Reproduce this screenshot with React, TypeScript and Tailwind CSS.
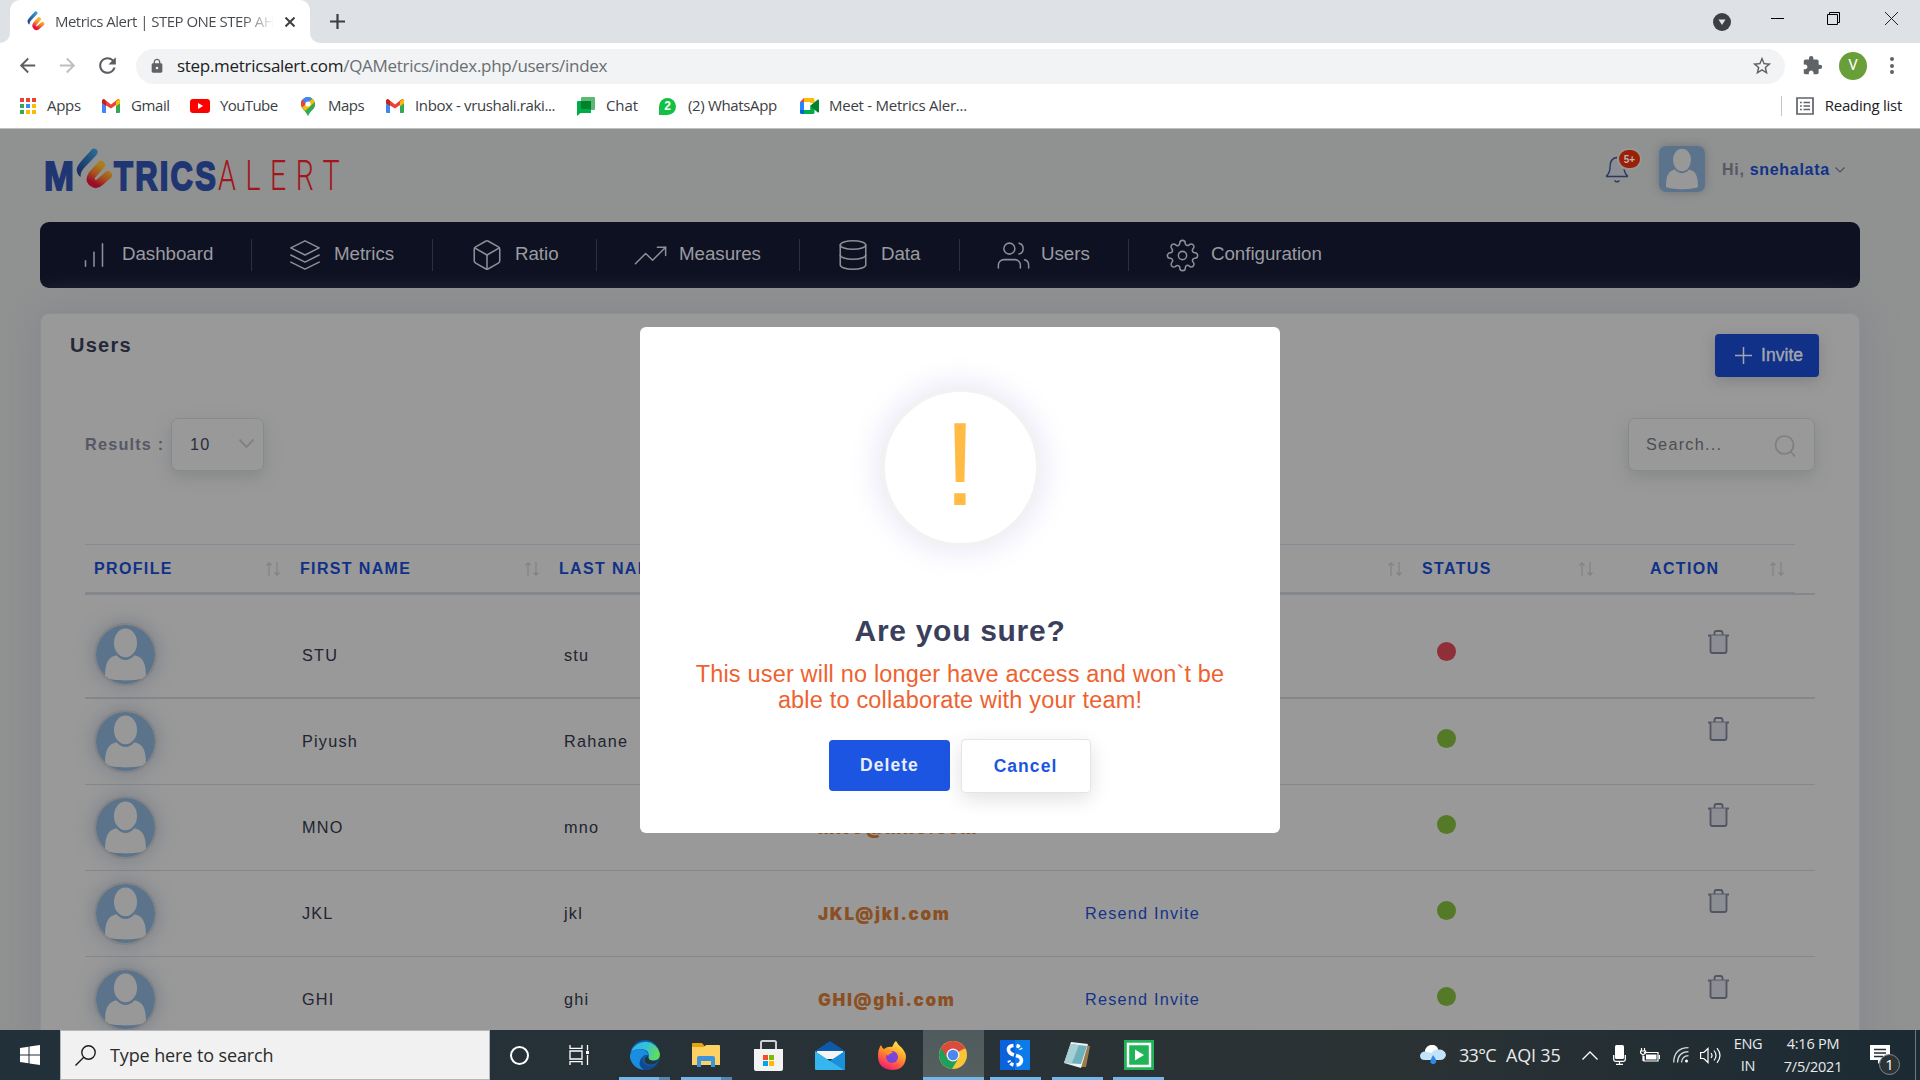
import React from "react";
import { FiBarChart, FiLayers, FiBox, FiTrendingUp, FiDatabase, FiUsers, FiSettings } from "react-icons/fi";
import { MdExtension, MdLock, MdStarBorder, MdRefresh, MdArrowBack, MdArrowForward } from "react-icons/md";

const Swirl = ({ id, className }: { id: string; className: string }) => (
  <svg className={className} viewBox="0 0 37 42" fill="none" strokeLinecap="round">
    <defs>
      <linearGradient id={id + "b"} x1="0" y1="1" x2="1" y2="0">
        <stop offset="0.1" stopColor="#26418f" />
        <stop offset="0.9" stopColor="#3c9bd8" />
      </linearGradient>
      <linearGradient id={id + "o"} x1="0" y1="1" x2="0.5" y2="0">
        <stop offset="0.1" stopColor="#e4113c" />
        <stop offset="0.5" stopColor="#f2702c" />
        <stop offset="1" stopColor="#fbb92a" />
      </linearGradient>
    </defs>
    <path d="M14.500 3Q17-1 20.500 1.500Q23 4 20 7.500L9 19Q4.500 23 4.500 29Q-1 24 1.500 18.500Q3 15 14.500 3Z" fill={`url(#${id}b)`} />
    <path d="M25 17L16 27Q13 32 17 35Q20 37.500 24 34L32 27" stroke={`url(#${id}o)`} strokeWidth="8" strokeLinejoin="round" />
  </svg>
);

const Gmail = () => (
  <svg className="h-[14px] w-[18px]" viewBox="0 0 18 14">
    <path d="M0 2v11q0 1 1 1h3V5Z" fill="#4285f4" />
    <path d="M18 2v11q0 1-1 1h-3V5Z" fill="#34a853" />
    <path d="M14 1.500 18 1.500V4l-4 3.500Z" fill="#fbbc04" />
    <path d="M0 2Q0 0 2 0L9 5.500 16 0Q18 0 18 2L14 6 9 9.500 4 6.500 0 4Z" fill="#ea4335" />
    <path d="M14 2.500 16 .6Q18 0 18 2V4l-4 3Z" fill="#fbbc04" />
    <path d="M0 4V2Q.2.400 2 .300L4 2V7Z" fill="#c5221f" />
  </svg>
);

const AppsIcon = () => (
  <div className="ml-[1px] grid w-[16px] grid-cols-3 gap-[2px]">
    {["bg-[#ea4335]", "bg-[#ea4335]", "bg-[#ea4335]", "bg-[#34a853]", "bg-[#4285f4]", "bg-[#fbbc04]", "bg-[#34a853]", "bg-[#fbbc04]", "bg-[#fbbc04]"].map((c, i) => (
      <div key={i} className={"h-[4px] w-[4px] " + c} />
    ))}
  </div>
);

const YouTube = () => (
  <svg className="h-[14px] w-[20px]" viewBox="0 0 20 14">
    <rect width="20" height="14" rx="3" fill="#f00" />
    <path d="M8 4v6l5.200-3z" fill="#fff" />
  </svg>
);
const Maps = () => (
  <svg className="ml-[2px] h-[19px] w-[14px]" viewBox="0 0 14 19">
    <path d="M7 0a7 7 0 0 0-7 7c0 5 5 7 7 12 2-5 7-7 7-12a7 7 0 0 0-7-7Z" fill="#34a853" />
    <path d="M1 10.500C-1 6 0 4 1.500 2.500L7 7Z" fill="#ea4335" />
    <path d="M1.500 2.500Q6-2 11 1.400L5 8Z" fill="#4285f4" />
    <path d="M1 10.500 11.500 1.800Q15 5 13.500 9L4.500 14Z" fill="#fbbc04" />
    <path d="M13.800 5Q15 11 10 13.500 8 15.500 7 19 6 16.500 4 14Z" fill="#34a853" />
    <circle cx="7" cy="7" r="2.600" fill="#fff" />
  </svg>
);
const Chat = () => (
  <svg className="h-[19px] w-[18px]" viewBox="0 0 18 19">
    <path d="M4 1q0-1 1-1h12q1 0 1 1v11q0 1-1 1H4z" fill="#5bb974" />
    <path d="M0 5q0-1 1-1h13v12H3.500L0 19z" fill="#00ac47" />
    <path d="M4 4h10v8H4z" fill="#00832d" />
  </svg>
);
const WhatsApp = () => (
  <div className="flex h-[17px] w-[17px] items-center justify-center rounded-full rounded-bl-[2px] bg-[#12c143] font-['Liberation_Sans'] text-[12px] font-bold text-white">2</div>
);
const Meet = () => (
  <svg className="h-[16px] w-[19px]" viewBox="0 0 19 16">
    <path d="M4 0h9q1.500 0 1.500 1.500V5H4z" fill="#fbbc04" />
    <path d="M4 0v4H0z" fill="#ea4335" />
    <path d="M0 4h4v8H0z" fill="#2684fc" />
    <path d="M0 12h4v4H1.500Q0 16 0 14.500z" fill="#0066da" />
    <path d="M4 11.500h6V8l4.500-3v9.500Q14.500 16 13 16H4z" fill="#00ac47" />
    <path d="M10 8 17.500 1.800Q19 1 19 2.500v11q0 1.500-1.500.7Z" fill="#00832d" />
    <path d="M4 4h6.200v8H4z" fill="#fff" />
  </svg>
);

const bookmarks: { icon: React.ReactNode; text: string; w: string; track: string }[] = [
  { icon: <AppsIcon />, text: "Apps", w: "w-[83px]", track: "ml-[-1px] tracking-[-0.300px]" },
  { icon: <Gmail />, text: "Gmail", w: "w-[88px]", track: "tracking-[-0.400px]" },
  { icon: <YouTube />, text: "YouTube", w: "w-[109px]", track: "ml-[1px] tracking-[-0.600px]" },
  { icon: <Maps />, text: "Maps", w: "w-[87px]", track: "tracking-[-0.500px]" },
  { icon: <Gmail />, text: "Inbox - vrushali.raki...", w: "w-[191px]", track: "tracking-[-0.370px]" },
  { icon: <Chat />, text: "Chat", w: "w-[82px]", track: "tracking-[-0.100px]" },
  { icon: <WhatsApp />, text: "(2) WhatsApp", w: "w-[141px]", track: "tracking-[-0.350px]" },
  { icon: <Meet />, text: "Meet - Metrics Aler...", w: "w-[180px]", track: "tracking-[-0.250px]" },
];

function Browser() {
  return (
    <div className="h-[129px] shrink-0 border-b border-[#bfc1c4] bg-white font-['Open_Sans',sans-serif]">
      <div className="flex h-[43px] justify-between bg-[#dee1e6]">
        <div className="flex">
          <div className="flex w-[10px] items-end bg-white">
            <div className="h-[43px] w-[10px] rounded-br-[10px] bg-[#dee1e6]" />
          </div>
          <div className="flex w-[300px] items-center rounded-t-[10px] bg-white pl-[17px]">
            <Swirl id="fav" className="mt-[-2px] h-[20px] w-[18px]" />
            <div className="mt-[-2px] ml-[10px] w-[219px] overflow-hidden bg-gradient-to-r from-[#45494d] from-85% to-white bg-clip-text text-[15px] leading-[22px] tracking-[-0.520px] whitespace-nowrap text-transparent">
              Metrics Alert | STEP ONE STEP AHEAD
            </div>
            <svg className="ml-[11px] h-[10px] w-[10px]" viewBox="0 0 10 10" stroke="#3c4043" strokeWidth="2">
              <path d="M.5.500l9 9M9.500.500l-9 9" />
            </svg>
          </div>
          <div className="w-[10px] bg-white">
            <div className="h-[43px] w-[10px] rounded-bl-[10px] bg-[#dee1e6]" />
          </div>
          <svg className="mt-[14px] ml-[10px] h-[15px] w-[15px]" viewBox="0 0 15 15" stroke="#3c4043" strokeWidth="2.200">
            <path d="M7.500 0v15M0 7.500h15" />
          </svg>
        </div>
        <div className="flex pr-[22px]">
          <svg className="mt-[13px] h-[18px] w-[18px]" viewBox="0 0 18 18">
            <circle cx="9" cy="9" r="9" fill="#3c4043" />
            <path d="M5.500 6.500h7L9 12z" fill="#dee1e6" />
          </svg>
          <div className="mt-[18px] ml-[40px] h-[1px] w-[13px] bg-black" />
          <svg className="mt-[12px] ml-[43px] h-[14px] w-[13px]" viewBox="0 0 13 14" fill="none" stroke="#000">
            <path d="M.5 2.500h10v10H.500zM2.500 2.500v-2h10v10h-2" />
          </svg>
          <svg className="mt-[12px] ml-[45px] h-[13px] w-[13px]" viewBox="0 0 13 13" stroke="#222">
            <path d="M0 0l13 13M13 0L0 13" />
          </svg>
        </div>
      </div>
      <div className="flex h-[45px] items-center pl-[16px]">
        <MdArrowBack size={23} color="#5a5e62" />
        <MdArrowForward size={23} color="#bcbec0" className="ml-[17px]" />
        <MdRefresh size={25} color="#5a5e62" className="ml-[16px]" />
        <div className="mt-[1px] ml-[16px] flex h-[35px] w-[1649px] items-center rounded-full bg-[#f1f3f4] pr-[12px] pl-[13px]">
          <MdLock size={16} color="#5f6368" />
          <div className="ml-[12px] grow text-[17px] tracking-[-0.290px] text-[#6a6e72]">
            <span className="text-[#202124]">step.metricsalert.com</span>/QAMetrics/index.php/users/index
          </div>
          <MdStarBorder size={22} color="#5f6368" />
        </div>
        <MdExtension size={21} color="#5f6368" className="ml-[17px]" />
        <div className="ml-[16px] flex h-[28px] w-[28px] items-center justify-center rounded-full bg-[#689f38] font-[Roboto] text-[15px] text-white">V</div>
        <div className="ml-[23px] flex flex-col gap-[2.500px]">
          <div className="h-[4px] w-[4px] rounded-full bg-[#5f6368]" />
          <div className="h-[4px] w-[4px] rounded-full bg-[#5f6368]" />
          <div className="h-[4px] w-[4px] rounded-full bg-[#5f6368]" />
        </div>
      </div>
      <div className="flex h-[36px] items-center pl-[19px] text-[15px] whitespace-nowrap text-[#3c4043]">
        {bookmarks.map((b, i) => (
          <div key={i} className={"flex shrink-0 items-center " + b.w}>
            <div className="flex w-[29px] shrink-0">{b.icon}</div>
            <div className={"mt-[-2px] " + b.track}>{b.text}</div>
          </div>
        ))}
        <div className="ml-auto h-[20px] w-px bg-[#c4c6c9]" />
        <svg className="ml-[14px] h-[18px] w-[18px]" viewBox="0 0 18 18" stroke="#5f6368" strokeWidth="1.700" fill="none">
          <path d="M1 1h16v16H1zM4 5.500h1.800M4 9h1.800M4 12.500h1.800M7.500 5.500H14M7.500 9H14M7.500 12.500H14" />
        </svg>
        <div className="mt-[-2px] mr-[18px] ml-[11px] tracking-[-0.260px] text-[#202124]">Reading list</div>
      </div>
    </div>
  );
}

const Person = ({ className }: { className: string }) => (
  <svg className={className} viewBox="0 0 46 46" fill="#989898">
    <rect width="46" height="46" fill="#5b738b" />
    <ellipse cx="23" cy="14" rx="9" ry="11.200" />
    <path d="M7 41C7 30 9 25 16 23.500C20 28.500 26 28.500 30 23.500C37 25 39 30 39 41C32 44 14 44 7 41Z" />
  </svg>
);

function Header() {
  return (
    <div className="flex h-[93px] shrink-0 items-start">
      <svg className="mt-[31px] ml-[45px] h-[30px] w-[29px] overflow-visible">
        <text x="-1" y="29.500" textLength="30" lengthAdjust="spacingAndGlyphs" className="fill-[#203672] stroke-[#203672] stroke-[1.800px] font-['Liberation_Sans'] text-[41px] font-bold">M</text>
      </svg>
      <Swirl id="logo" className="mt-[19px] ml-[2px] h-[42px] w-[37px] brightness-[0.68]" />
      <svg className="mt-[31px] h-[30px] w-[104px] overflow-visible">
        <text x="1" y="29.500" textLength="104" lengthAdjust="spacingAndGlyphs" className="fill-[#203672] stroke-[#203672] stroke-2 font-['Liberation_Sans'] text-[41px] font-bold tracking-[3px]">TRICS</text>
      </svg>
      <svg className="mt-[31px] h-[30px] w-[122px] overflow-visible">
        <text x="1" y="29.500" textLength="131" lengthAdjust="spacingAndGlyphs" className="fill-[#a3151b] font-[Roboto] text-[42px] font-light tracking-[14px]">ALERT</text>
      </svg>
      <div className="relative mt-[27px] ml-auto h-[28px] w-[24px]">
        <svg className="h-[28px] w-[24px]" viewBox="0 0 24 28" fill="none" stroke="#2b3a5c" strokeWidth="1.400">
          <path d="M1 20.500h22M1 20.500Q5 17 5 11.500 5 2 12 1.500 19 2 19 11.500 19 17 23 20.500" fill="#8b8d97" />
          <path d="M9.500 24.500q2.500 2.500 5 0" />
        </svg>
        <div className="absolute top-[-6px] left-[14px] flex h-[18px] w-[21px] items-center justify-center rounded-full bg-[#9c2008] font-['Liberation_Sans'] text-[10px] font-bold text-[#b9b4b2] ring-2 ring-[#979797]">5+</div>
      </div>
      <Person className="mt-[17px] ml-[30px] h-[46px] w-[46px] rounded-[7px] shadow-[0_0_8px_rgba(60,60,80,0.35)]" />
      <div className="mt-[30px] ml-[17px] w-[110px] text-[16px] leading-[22px] font-bold tracking-[0.700px] whitespace-nowrap text-[#575963]">
        Hi, <span className="text-[#113289]">snehalata</span>
      </div>
      <svg className="mt-[38px] mr-[75px] ml-[3px] h-[6px] w-[10px]" viewBox="0 0 10 6" fill="none" stroke="#50535f" strokeWidth="1.200">
        <path d="M.5.500L5 5 9.500.500" />
      </svg>
    </div>
  );
}

const nav = [
  { I: FiBarChart, t: "Dashboard", w: "w-[212px]", p: "pl-[37px]", g: "ml-[11px]", s: 34 },
  { I: FiLayers, t: "Metrics", w: "w-[181px]", p: "pl-[36px]", g: "ml-[12px]", s: 34 },
  { I: FiBox, t: "Ratio", w: "w-[164px]", p: "pl-[37px]", g: "ml-[11px]", s: 34 },
  { I: FiTrendingUp, t: "Measures", w: "w-[203px]", p: "pl-[37px]", g: "ml-[12px]", s: 33 },
  { I: FiDatabase, t: "Data", w: "w-[160px]", p: "pl-[36px]", g: "ml-[11px]", s: 34 },
  { I: FiUsers, t: "Users", w: "w-[169px]", p: "pl-[37px]", g: "ml-[11px]", s: 33 },
  { I: FiSettings, t: "Configuration", w: "w-[260px]", p: "pl-[37px]", g: "ml-[12px]", s: 33 },
];

function Nav() {
  return (
    <div className="mx-[40px] flex h-[66px] w-[1820px] shrink-0 items-center rounded-[9px] bg-[#0e1122]">
      {nav.map((n, i) => (
        <div key={i} className={"flex h-[32px] shrink-0 items-center text-[18.750px] text-[#9b9ba0] " + n.w + " " + n.p + (i < 6 ? " border-r border-[#2c2f3f]" : "")}>
          <n.I size={n.s} strokeWidth={1.1} color="#8d8e96" className="shrink-0" />
          <span className={"mt-[-2px] tracking-[-0.050px] " + n.g}>{n.t}</span>
        </div>
      ))}
    </div>
  );
}

const SortArrows = () => (
  <svg className="h-[14px] w-[14px]" viewBox="0 0 14 14" fill="none" stroke="#828282" strokeWidth="1.200">
    <path d="M3 14V1M.5 3.500L3 .800 5.500 3.500M11 0v13M8.500 10.500L11 13.200 13.500 10.500" />
  </svg>
);

const Trash = () => (
  <svg className="h-[24px] w-[21px]" viewBox="0 0 21 24" fill="none" stroke="#515463" strokeWidth="1.800">
    <path d="M0 5.500h21" />
    <path d="M2.500 5.500V21q0 2 2 2h12q2 0 2-2V5.500" fill="#8d8e93" />
    <path d="M6.500 5V3q0-2 2-2h4q2 0 2 2v2" />
  </svg>
);

const heads = [
  { t: "PROFILE", p: "pr-[20px] pl-[9px]" },
  { t: "FIRST NAME", p: "pr-[20px]" },
  { t: "LAST NAME", p: "pr-[20px]" },
  { t: "EMAIL", p: "pr-[20px]" },
  { t: "INVITE", p: "pr-[20px]" },
  { t: "STATUS", p: "pr-[57px]" },
  { t: "ACTION", p: "pr-[11px]" },
];

const rows = [
  { f: "STU", l: "stu", e: "", i: "", dot: "bg-[#8f2f37]", c: "h-[104px] pt-[18px] border-b-2 border-[#84888d]" },
  { f: "Piyush", l: "Rahane", e: "", i: "", dot: "bg-[#547a28]", c: "h-[86px] border-b border-[#85868f]" },
  { f: "MNO", l: "mno", e: "MNO@mno.com", i: "", dot: "bg-[#547a28]", c: "h-[86px] border-b border-[#85868f]" },
  { f: "JKL", l: "jkl", e: "JKL@jkl.com", i: "Resend Invite", dot: "bg-[#547a28]", c: "h-[86px] border-b border-[#85868f]" },
  { f: "GHI", l: "ghi", e: "GHI@ghi.com", i: "Resend Invite", dot: "bg-[#547a28]", c: "h-[86px] border-b border-[#85868f]" },
];

function Card() {
  return (
    <div className="mx-[41px] mt-[26px] h-[800px] w-[1818px] shrink-0 rounded-t-[8px] bg-[#999] shadow-[0_0_0_1px_#8f9095,0_0_36px_3px_#86878f]">
      <div className="flex justify-between pt-[20px] pr-[40px] pl-[29px]">
        <div className="mt-[-1px] text-[20px] leading-[24px] font-bold tracking-[1.250px] text-[#242838]">Users</div>
        <div className="flex h-[43px] w-[104px] items-center rounded-[4px] bg-[#103187] pl-[20px] text-[17.500px] text-[#a3a6b0] shadow-[0_4px_14px_rgba(90,90,90,0.35)]">
          <svg className="h-[17px] w-[17px]" viewBox="0 0 17 17" stroke="#a3a6b0" strokeWidth="1.500">
            <path d="M8.500 0v17M0 8.500h17" />
          </svg>
          <span className="ml-[9px] tracking-[0.050px] [-webkit-text-stroke:0.4px_#a3a6b0]">Invite</span>
        </div>
      </div>
      <div className="mt-[41px] flex h-[53px] items-center pr-[44px] pl-[44px] text-[16.250px]">
        <div className="w-[86px] font-bold tracking-[1.200px] text-[#565866]">Results :</div>
        <div className="flex h-[53px] w-[93px] items-center justify-between rounded-[7px] border border-[#858b95] bg-[#999] pr-[9px] pl-[18px] tracking-[1.250px] text-[#2a2c3a] shadow-[0_6px_16px_rgba(110,120,115,0.45)]">
          10
          <svg className="mt-[-2px] h-[9px] w-[15px]" viewBox="0 0 15 9" fill="none" stroke="#7f7f7f" strokeWidth="1.800">
            <path d="M.5.500l7 7.500 7-7.500" />
          </svg>
        </div>
        <div className="ml-auto flex h-[53px] w-[187px] items-center justify-between rounded-[7px] border border-[#858b95] bg-[#999] pr-[18px] pl-[17px] tracking-[1.250px] text-[#4b4e54] shadow-[0_6px_16px_rgba(110,120,115,0.45)]">
          <span className="mt-[-1px]">Search...</span>
          <svg className="mt-[2px] h-[22px] w-[22px]" viewBox="0 0 22 22" fill="none" stroke="#7f7f7f" strokeWidth="1.700">
            <circle cx="10.500" cy="10" r="9" />
            <path d="M16.500 16.500l4.500 5" />
          </svg>
        </div>
      </div>
      <div className="mt-[73px] ml-[44px] w-[1730px]">
        <div className="grid h-[51px] w-[1710px] grid-cols-[215px_259px_259px_267px_337px_228px_145px] border-t border-[#858b95]">
          {heads.map((h, i) => (
            <div key={h.t} className={"flex h-[48px] items-center justify-between text-[16px] font-bold tracking-[1.350px] text-[#103187] " + h.p}>
              {h.t}
              <SortArrows />
            </div>
          ))}
        </div>
        <div className="mt-[-3px] h-[1px] w-[1710px] bg-[#84888d]" />
        <div className="h-[2px] bg-[#84888d]" />
        {rows.map((r) => (
          <div key={r.f} className={"grid grid-cols-[217px_262px_254px_267px_352px_271px_107px] items-center text-[16.250px] tracking-[1.200px] text-[#222430] " + r.c}>
            <div className="mb-[1px] pl-[9px]">
              <div className="h-[63px] w-[63px] rounded-full border-2 border-[#828383] shadow-[0_0_18px_rgba(100,108,128,0.6)]">
                <Person className="h-[59px] w-[59px] rounded-full" />
              </div>
            </div>
            <div>{r.f}</div>
            <div>{r.l}</div>
            <div className="font-[Inter] text-[17px] leading-[22px] font-black tracking-[1.700px] whitespace-nowrap text-[#8a5024]">{r.e}</div>
            <div className="text-[#143487]">{r.i}</div>
            <div className={"mb-[7px] h-[19px] w-[19px] rounded-full " + r.dot} />
            <div className="mb-[26px]">
              <Trash />
            </div>
          </div>
        ))}
      </div>
    </div>
  );
}

function Modal() {
  return (
    <div className="absolute top-[198px] left-[640px] flex h-[506px] w-[640px] flex-col items-center rounded-[6px] bg-white">
      <div className="mt-[59px] flex h-[163px] w-[163px] shrink-0 items-center justify-center rounded-full border-[6px] border-[#f1f2f3] pb-[8px] text-[119px] leading-[116px] text-[#ffbb44] shadow-[0_0_30px_4px_#ebe8f9]">
        !
      </div>
      <div className="mt-[65px] text-[30px] leading-[34px] font-bold tracking-[0.700px] text-[#3b3f5c]">Are you sure?</div>
      <div className="mt-[13px] text-center text-[23.500px] leading-[26px] tracking-[0.180px] whitespace-nowrap text-[#ee6230]">
        This user will no longer have access and won`t be
        <br />
        able to collaborate with your team!
      </div>
      <div className="mt-[26px] flex w-full items-start pl-[189px] text-[17.500px] font-bold tracking-[1.050px]">
        <div className="mt-[1px] flex h-[51px] w-[121px] items-center justify-center rounded-[4px] bg-[#1b55e2] text-[#e8eefc]">Delete</div>
        <div className="ml-[11px] flex h-[54px] w-[130px] items-center justify-center rounded-[4px] border border-[#e5e5e5] bg-white pr-[1px] text-[#1b55e2] shadow-[0_6px_20px_rgba(0,0,0,0.12)]">Cancel</div>
      </div>
    </div>
  );
}

const Edge = () => (
  <svg className="h-[30px] w-[30px]" viewBox="0 0 30 30">
    <defs>
      <linearGradient id="eg" x1="0" y1="0.300" x2="1" y2="0.500">
        <stop offset="0" stopColor="#2fb4ea" />
        <stop offset="0.500" stopColor="#35c1d8" />
        <stop offset="1" stopColor="#66e04a" />
      </linearGradient>
    </defs>
    <circle cx="15" cy="15" r="15" fill="#0c59a4" />
    <path d="M1 12A15 15 0 0 1 30 14Q30 20 23 20.500 17 20.500 18.500 17 20 10 12 9 5 8.500 1 12Z" fill="url(#eg)" />
    <path d="M0 15Q2 9 9 9 17 9.500 18.500 15 13 14 11.500 19 11 26 18 29.700 4 31 0 18Z" fill="#1b8de0" />
    <path d="M18.500 15Q17 20 23 21 26 21 29 19.500 25 26 18 24 11 21 18.500 15Z" fill="#26343b" />
    <path d="M12 17Q11 26 22 26.500 25 26 28 23 23 31 14 29.900 6 25 12 17Z" fill="#114a8b" />
  </svg>
);
const Folder = () => (
  <svg className="h-[24px] w-[28px]" viewBox="0 0 28 24">
    <path d="M0 1q0-1 1-1h9l2.500 3H28v6H0z" fill="#e5a310" />
    <path d="M0 4h12l2-2h13q1 0 1 1v19H0z" fill="#fdd263" />
    <path d="M5 24V15q0-2 2-2h14q2 0 2 2v9h-4v-6H9v6z" fill="#3b94dc" />
  </svg>
);
const Store = () => (
  <svg className="h-[31px] w-[29px]" viewBox="0 0 29 31">
    <path d="M7 12V2.500Q7 1 8.500 1h12Q22 1 22 2.500V12" fill="none" stroke="#cfcfd4" strokeWidth="2" />
    <path d="M0 9h29v20q0 2-2 2H2q-2 0-2-2z" fill="#f3f3f3" />
    <path d="M9 15h5v5H9z" fill="#f25022" />
    <path d="M15 15h5v5h-5z" fill="#7fba00" />
    <path d="M9 21h5v5H9z" fill="#00a4ef" />
    <path d="M15 21h5v5h-5z" fill="#ffb900" />
  </svg>
);
const Mail = () => (
  <svg className="h-[29px] w-[30px]" viewBox="0 0 30 29">
    <path d="M0 10 15 0 30 10V14H0z" fill="#0f5aa8" />
    <path d="M2 10h26v8H2z" fill="#f4f4f6" />
    <path d="M0 10l15 10L30 10v18q0 1-1 1H1q-1 0-1-1z" fill="#37b5ef" />
    <path d="M15 20 30 10v18q0 1-1 1z" fill="#1b8fdc" />
  </svg>
);
const Firefox = () => (
  <svg className="h-[29px] w-[28px]" viewBox="0 0 28 29">
    <defs>
      <linearGradient id="ff" x1="0.800" y1="0" x2="0.300" y2="1">
        <stop offset="0" stopColor="#fff14f" />
        <stop offset="0.450" stopColor="#ff9a28" />
        <stop offset="0.800" stopColor="#ff4450" />
        <stop offset="1" stopColor="#e21e7b" />
      </linearGradient>
    </defs>
    <path d="M3 4Q4 7 6 8 10 5 14 6 17 0 18 0 20 4 24 7 28 12 28 16 27 29 14 29 0 28 0 15 0 8 3 4Z" fill="url(#ff)" />
    <circle cx="14" cy="16" r="6" fill="#7b43d8" />
    <path d="M5 9Q8 7 12 9L15 12Q11 12 10 15 8 12 5 9Z" fill="#ff9425" />
  </svg>
);
const Chrome = () => (
  <svg className="h-[28px] w-[28px]" viewBox="0 0 28 28">
    <circle cx="14" cy="14" r="14" fill="#fbc437" />
    <path d="M14 14 1.900 7A14 14 0 0 1 26.100 7Z" fill="#db4b3c" />
    <path d="M14 7.500H26.300L26.100 7 14 4Z" fill="#db4b3c" />
    <path d="M1.900 7A14 14 0 0 0 13 28L19.600 17.200 14 14Z" fill="#1fa05a" />
    <path d="M1.900 7 8.400 17.500 14 7.500 10 5Z" fill="#db4b3c" />
    <path d="M1.900 7 8.300 17.500Q4 18 1.900 7Z" fill="#1fa05a" />
    <circle cx="14" cy="14" r="6.500" fill="#f3f3f3" />
    <circle cx="14" cy="14" r="5.200" fill="#4b87ee" />
  </svg>
);
const SApp = () => (
  <svg className="h-[30px] w-[30px]" viewBox="0 0 30 30">
    <rect width="30" height="30" fill="#0a63dd" />
    <path d="M15 0h15v30H15z" fill="#0b7bea" />
    <path d="M13.500 5.500Q8 6 8.500 10 9 13.500 14 15M16 15.500Q21.500 17 21.500 20.500 21 24.500 16.500 25" fill="none" stroke="#fff" strokeWidth="3.600" />
    <path d="M16.500 5.500Q20 6.500 21 9.500M13.500 25Q10 24 9 20.500" fill="none" stroke="#fff" strokeWidth="3.400" strokeDasharray="3.500 1.500" />
  </svg>
);
const Notepad = () => (
  <svg className="h-[28px] w-[28px]" viewBox="0 0 28 28">
    <path d="M10 2 27 5 23 26 17 26Z" fill="#9c7b4a" />
    <path d="M8 1 25 3 18 27 1 22Z" fill="#eef4f5" />
    <path d="M8 3 24 5 18 23 1 22Z" fill="#6fb0bd" />
    <path d="M8 3 16 4 9 22 1 22Z" fill="#a5d0d6" />
  </svg>
);
const Green = () => (
  <svg className="h-[30px] w-[30px]" viewBox="0 0 30 30">
    <rect width="30" height="30" fill="#1fb457" />
    <path d="M4 4h22v22H4z" fill="none" stroke="#fff" strokeWidth="2.400" />
    <path d="M11 9.500v11l9-5.500z" fill="#fff" />
  </svg>
);

const apps = [
  { n: <Edge />, w: "w-[51px]", u: "w-[40px]", s: true },
  { n: <Folder />, w: "w-[51px]", u: "w-[40px]", s: true },
  { n: <Store />, w: "w-[51px]", u: "", s: false },
  { n: <Mail />, w: "w-[51px]", u: "", s: false },
  { n: <Firefox />, w: "w-[51px]", u: "", s: false },
  { n: <Chrome />, w: "w-[61px]", u: "w-[61px]", s: false },
  { n: <SApp />, w: "w-[51px]", u: "w-[51px]", s: false },
  { n: <Notepad />, w: "w-[51px]", u: "w-[51px]", s: false },
  { n: <Green />, w: "w-[51px]", u: "w-[51px]", s: false },
];

function Taskbar() {
  return (
    <div className="flex h-[50px] shrink-0 bg-gradient-to-r from-[#22303a] via-[#2b3234] via-72% to-[#1b2a33] font-['Open_Sans',sans-serif] whitespace-nowrap text-[#e8eaeb]">
      <div className="flex w-[60px] items-center justify-center">
        <svg className="h-[20px] w-[20px]" viewBox="0 0 20 20" fill="#fff">
          <path d="M0 3l8.500-1.200v7.700H0zM9.500 1.600 20 0v9.500H9.500zM0 10.500h8.500v7.700L0 17zM9.500 10.500H20V20L9.500 18.400z" />
        </svg>
      </div>
      <div className="flex w-[430px] items-center border border-[#b4b7b9] bg-[#f1f1f1] pl-[14px]">
        <svg className="h-[21px] w-[21px]" viewBox="0 0 21 21" fill="none" stroke="#1b1b1b" strokeWidth="1.400">
          <circle cx="13.500" cy="7.500" r="6.700" />
          <path d="M8.800 12.300L.5 20.500" />
        </svg>
        <div className="ml-[14px] text-[18px] tracking-[-0.110px] text-[#2b2b2b]">Type here to search</div>
      </div>
      <div className="flex w-[59px] items-center justify-center">
        <div className="h-[19px] w-[19px] rounded-full border-[2.500px] border-white" />
      </div>
      <div className="flex w-[61px] items-center justify-center">
        <svg className="h-[20px] w-[21px]" viewBox="0 0 21 20" fill="none" stroke="#fff" strokeWidth="1.300">
          <path d="M1 0v3.300h12V0M1 20v-3.300h12V20M1 6h12v8H1zM18.500 0v5.500M18.500 10v10" />
          <path d="M17 6h3v3h-3z" fill="#fff" stroke="none" />
        </svg>
      </div>
      <div className="ml-[9px] flex gap-[10.800px]">
        {apps.map((a, i) => (
          <div
            key={i}
            className={"flex shrink-0 flex-col " + a.w + (i === 5 ? " bg-gradient-to-b from-[#4e5a5d] to-[#56605f] -mx-[5px]" : "")}
          >
            <div className="flex h-[47px] items-center justify-center pt-[3px]">{a.n}</div>
            <div className="flex h-[3px]">
              <div className={"h-[3px] bg-[#76b5ea] " + a.u} />
              {a.s && <div className="h-[3px] w-[11px] bg-[#5586ae]" />}
            </div>
          </div>
        ))}
      </div>
      <div className="ml-auto flex h-[50px] items-center">
        <svg className="h-[20px] w-[26px]" viewBox="0 0 26 20">
          <path d="M5 15Q0 15 0 10.500 1 6.500 5 6.500 6 0 12 0 17 0 18 4.500 25 4 26 10 25 15 20 15Z" fill="#c3e3f9" />
          <path d="M5 6.500Q6 0 12 0 17 0 18 4.500 13 4 12 8Z" fill="#fff" />
          <path d="M13 10Q17 15 16 17.500 13 21 10.500 17.500 10 15 13 10Z" fill="#2e8ae6" />
        </svg>
        <div className="ml-[13px] w-[47px] text-[18px] tracking-[-0.700px]">33°C</div>
        <div className="w-[76px] text-[18px] tracking-[-0.200px]">AQI 35</div>
        <svg className="h-[9px] w-[16px]" viewBox="0 0 16 9" fill="none" stroke="#fff" strokeWidth="1.300">
          <path d="M.5 8.500L8 1l7.500 7.500" />
        </svg>
        <svg className="ml-[15px] h-[20px] w-[13px]" viewBox="0 0 13 20" fill="none" stroke="#fff" strokeWidth="1.300">
          <rect x="2" y="0" width="9" height="14" rx="1.500" fill="#fff" stroke="none" />
          <path d="M.7 10v4.500q0 1.800 1.800 1.800h8q1.800 0 1.800-1.800V10M6.500 16.500V19M3 19.300h7" />
        </svg>
        <svg className="ml-[14px] h-[14px] w-[20px]" viewBox="0 0 20 14" fill="none" stroke="#fff" strokeWidth="1.200">
          <path d="M4 4.500h14v8.500H4V8M19.500 7v4M1.500 0v3M4.500 0v3M.6 3h5v2L3 7 .6 5zM3 7v6" />
          <path d="M6 6.500h10.500v5H6z" fill="#fff" stroke="none" />
        </svg>
        <svg className="ml-[13px] h-[16px] w-[16px]" viewBox="0 0 16 16" fill="none" stroke="#d5d8da" strokeWidth="1.300">
          <path d="M.7 15.500Q1 1 15.500.7M4.500 15.500Q5 5 15.500 4.700M8.500 15.500Q9 9 15.500 8.700" />
          <circle cx="13.500" cy="14" r="1.500" fill="#fff" stroke="none" />
        </svg>
        <svg className="ml-[11px] h-[17px] w-[21px]" viewBox="0 0 21 17" fill="none" stroke="#fff" strokeWidth="1.200">
          <path d="M.6 5.500h3.200L8 1.500v14L3.800 11.500H.6zM11 6q2 2.500 0 5M14 3.500q4 5 0 10M17 1.200q6 7.500 0 14.600" />
        </svg>
        <div className="ml-[8px] w-[38px] text-center text-[14.500px] leading-[22px] tracking-[-0.300px]">
          ENG
          <br />
          IN
        </div>
        <div className="ml-[6px] w-[80px] text-center text-[14.500px] leading-[23px] tracking-[-0.250px]">
          4:16 PM
          <br />
          7/5/2021
        </div>
        <div className="relative ml-[17px] h-[20px] w-[20px]">
          <svg className="h-[20px] w-[20px]" viewBox="0 0 20 20" fill="#fff">
            <path d="M0 0h20v15h-8.500L8 19v-4H0z" />
            <path d="M4 4.500h12M4 8h12M4 11.500h9" stroke="#222e35" strokeWidth="1.300" />
          </svg>
          <div className="absolute top-[9px] left-[9px] flex h-[21px] w-[21px] items-center justify-center rounded-full border border-[#83888b] bg-[#2d3437] text-[15px] leading-[15px] text-white">1</div>
        </div>
        <div className="mr-[4px] ml-[25px] h-[50px] w-px bg-[#6f787d]" />
      </div>
    </div>
  );
}

export default function App() {
  return (
    <div className="flex h-[1080px] w-[1920px] flex-col overflow-hidden bg-white">
      <Browser />
      <div className="relative flex h-[901px] shrink-0 flex-col overflow-hidden bg-[#909191] font-['Liberation_Sans',Arial,sans-serif]">
        <Header />
        <Nav />
        <Card />
        <Modal />
      </div>
      <Taskbar />
    </div>
  );
}
